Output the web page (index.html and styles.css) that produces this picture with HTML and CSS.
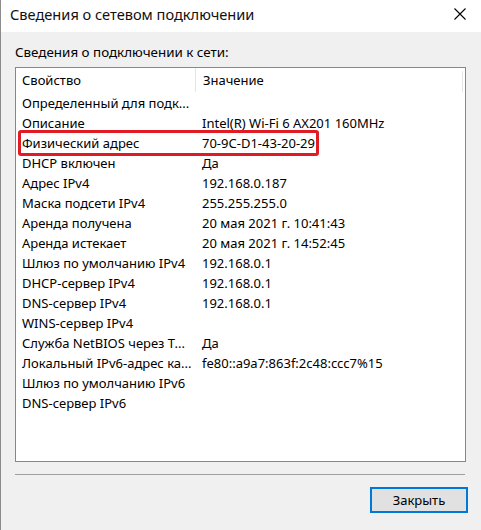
FILE: index.html
```html
<!DOCTYPE html>
<html lang="ru">
<head>
<meta charset="utf-8">
<title>Сведения о сетевом подключении</title>
<link rel="stylesheet" href="styles.css">
</head>
<body>
<div class="window">
  <div class="titlebar">
    <span class="title">Сведения о сетевом подключении</span>
    <svg class="close" width="12" height="12" viewBox="0 0 12 12"><path d="M0.5 0.5 L11.5 11.5 M11.5 0.5 L0.5 11.5" stroke="#000" stroke-width="1.1" fill="none"/></svg>
  </div>
  <div class="content">
    <div class="label">Сведения о подключении к сети:</div>
    <div class="listbox">
      <div class="row header"><span class="c1">Свойство</span><span class="c2">Значение</span><span class="hend"></span></div>
      <div class="row"><span class="c1">Определенный для подк...</span><span class="c2"></span></div>
      <div class="row"><span class="c1">Описание</span><span class="c2">Intel(R) Wi-Fi 6 AX201 160MHz</span></div>
      <div class="row marked"><span class="c1">Физический адрес</span><span class="c2">70-9C-D1-43-20-29</span><span class="redbox"></span></div>
      <div class="row"><span class="c1">DHCP включен</span><span class="c2">Да</span></div>
      <div class="row"><span class="c1">Адрес IPv4</span><span class="c2">192.168.0.187</span></div>
      <div class="row"><span class="c1">Маска подсети IPv4</span><span class="c2">255.255.255.0</span></div>
      <div class="row"><span class="c1">Аренда получена</span><span class="c2">20 мая 2021 г. 10:41:43</span></div>
      <div class="row"><span class="c1">Аренда истекает</span><span class="c2">20 мая 2021 г. 14:52:45</span></div>
      <div class="row"><span class="c1">Шлюз по умолчанию IPv4</span><span class="c2">192.168.0.1</span></div>
      <div class="row"><span class="c1">DHCP-сервер IPv4</span><span class="c2">192.168.0.1</span></div>
      <div class="row"><span class="c1">DNS-сервер IPv4</span><span class="c2">192.168.0.1</span></div>
      <div class="row"><span class="c1">WINS-сервер IPv4</span><span class="c2"></span></div>
      <div class="row"><span class="c1">Служба NetBIOS через Т...</span><span class="c2">Да</span></div>
      <div class="row"><span class="c1">Локальный IPv6-адрес ка...</span><span class="c2">fe80::a9a7:863f:2c48:ccc7%15</span></div>
      <div class="row"><span class="c1">Шлюз по умолчанию IPv6</span><span class="c2"></span></div>
      <div class="row"><span class="c1">DNS-сервер IPv6</span><span class="c2"></span></div>
    </div>
    <div class="separator"></div>
    <div class="buttons"><button class="btn">Закрыть</button></div>
  </div>
</div>
</body>
</html>
```

FILE: styles.css
```css
* { box-sizing: border-box; }
html, body { margin: 0; padding: 0; }
body {
  width: 481px;
  height: 530px;
  overflow: hidden;
  font-family: "Noto Sans", "Liberation Sans", sans-serif;
  color: #000;
  background: #f0f0f0;
}
.window {
  width: 481px;
  height: 530px;
  border-left: 1px solid #8c8c8c;
  background: #f0f0f0;
  display: flex;
  flex-direction: column;
}
.titlebar {
  height: 32px;
  background: #fff;
  display: flex;
  align-items: center;
  justify-content: space-between;
  padding: 0 15px 0 9px;
  flex: none;
}
.title {
  font-size: 14.6px;
  color: #111;
  line-height: 1;
  margin-top: -3px;
}
.close { display: block; margin-top: -5px; }
.content {
  padding: 0 14px 0 14px;
  display: flex;
  flex-direction: column;
}
.label {
  font-size: 13.4px;
  line-height: 18px;
  margin-top: 11px;
  height: 24px;
}
.listbox {
  width: 451px;
  height: 395px;
  background: #fff;
  border: 1px solid #828790;
  font-size: 13px;
}
.row {
  position: relative;
  display: flex;
  height: 20px;
  align-items: center;
  white-space: nowrap;
}
.row.header { height: 25px; padding-bottom: 1px; }
.c1 { width: 179px; padding-left: 6px; flex: none; }
.c2 { padding-left: 7px; flex: 1; }
.header .c2 { border-left: 1px solid #e5e5e5; align-self: stretch; display: flex; align-items: center; }
.header .hend { width: 1px; align-self: stretch; background: #e5e5e5; margin: 3px 2px 0 0; }
.redbox {
  position: absolute;
  left: 2px;
  top: -3px;
  width: 301px;
  height: 26px;
  border: 3px solid #e01b24;
  border-radius: 3px;
  pointer-events: none;
}
.separator {
  margin-top: 12px;
  width: 450px;
  height: 1px;
  background: #a0a0a0;
}
.buttons {
  display: flex;
  justify-content: flex-end;
  margin-top: 12px;
  width: 453px;
}
.btn {
  width: 98px;
  height: 26px;
  background: #e1e1e1;
  border: 2px solid #0078d7;
  font-family: inherit;
  font-size: 13px;
  color: #000;
  padding: 0;
}
```
